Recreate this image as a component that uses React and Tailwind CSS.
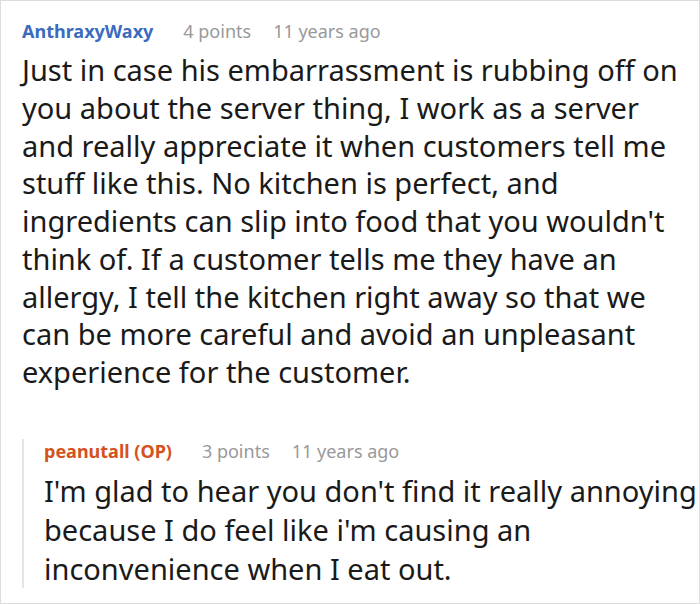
import React from "react";

const Meta = ({ name, nameClass, points, age }) => (
  <div className="flex items-center text-[18px] leading-[24px]">
    <span className={`font-bold ${nameClass}`}>{name}</span>
    <span className="ml-[30px] text-[#999999]">{points}</span>
    <span className="ml-[22px] text-[#999999]">{age}</span>
  </div>
);

const App = () => {
  return (
    <div
      className="w-[700px] h-[604px] overflow-hidden border border-[#dddddd] bg-white pl-[21px] pt-[18px] text-[#1a1a1a]"
      style={{ fontFamily: '"Noto Sans", "Open Sans", sans-serif' }}
    >
      <Meta
        name="AnthraxyWaxy"
        nameClass="text-[#3b6bbf]"
        points="4 points"
        age="11 years ago"
      />
      <p className="mt-[8px] pr-[4px] text-[29px] leading-[37.75px]">
        Just in case his embarrassment is rubbing off on you about the server
        thing, I work as a server and really appreciate it when customers tell
        me stuff like this. No kitchen is perfect, and ingredients can slip into
        food that you wouldn't think of. If a customer tells me they have an
        allergy, I tell the kitchen right away so that we can be more careful
        and avoid an unpleasant experience for the customer.
      </p>
      <div className="mt-[48px] border-l-2 border-[#e5e5e5] pl-[20px]">
        <Meta
          name="peanutall (OP)"
          nameClass="text-[#d4521d]"
          points="3 points"
          age="11 years ago"
        />
        <p className="mt-[8px] pr-[2px] text-[29px] leading-[39px]">
          I'm glad to hear you don't find it really annoying because I do feel
          like i'm causing an inconvenience when I eat out.
        </p>
      </div>
    </div>
  );
};

export default App;
